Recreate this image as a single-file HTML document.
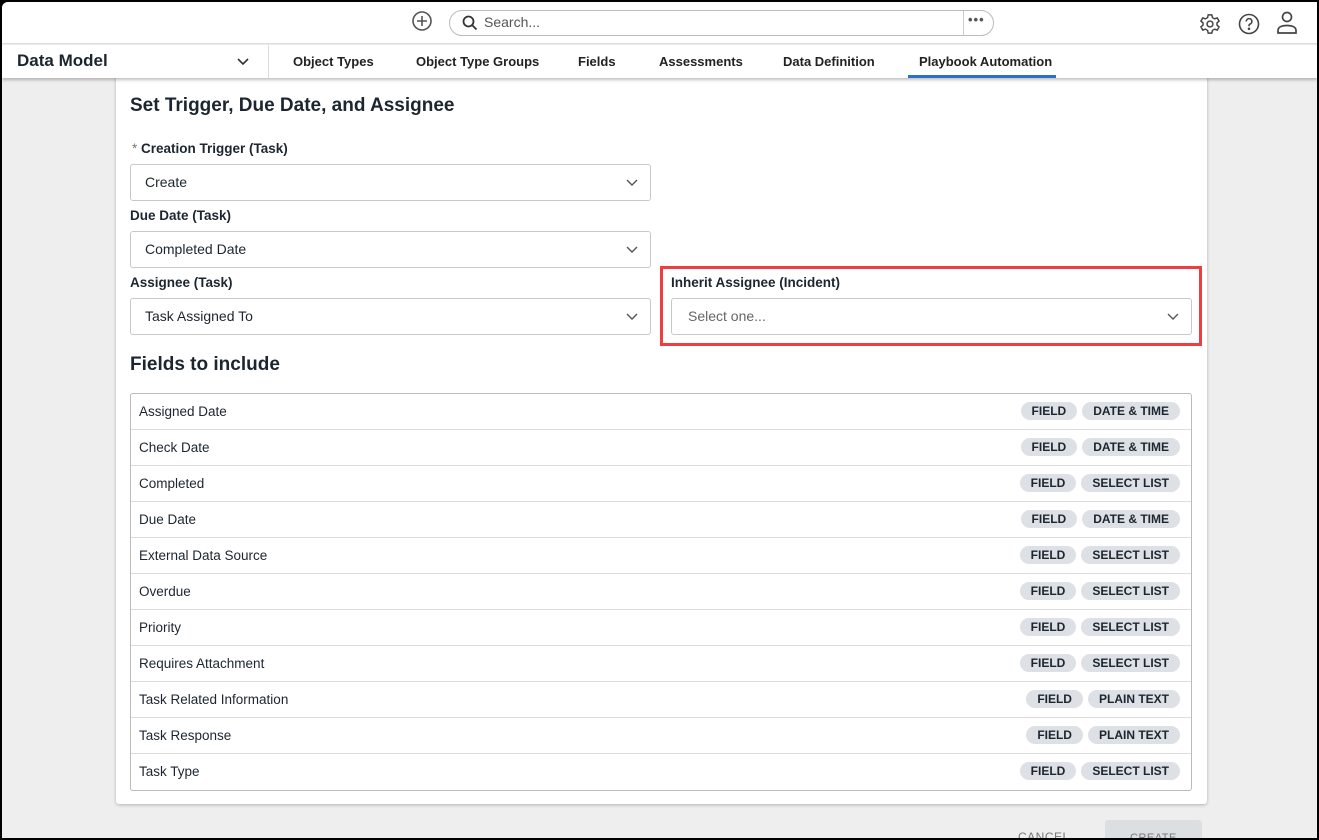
<!DOCTYPE html>
<html><head><style>
*{box-sizing:border-box;margin:0;padding:0}
body{width:1319px;height:840px;overflow:hidden;background:#000;font-family:"Liberation Sans",sans-serif;color:#1c2630}
#frame{position:absolute;left:2px;top:2px;width:1315px;height:836px;background:#eeeeee;overflow:hidden;border-radius:6px 0 0 0}
#top{position:absolute;left:0;top:0;width:100%;height:42px;background:#fff;border-bottom:1px solid #ddd}
#nav{position:absolute;left:0;top:43px;width:100%;height:33px;background:#fff;box-shadow:0 2px 3px rgba(0,0,0,.25);z-index:2}
#panel{position:absolute;left:114px;top:60px;width:1091px;height:742px;background:#fff;box-shadow:0 1px 3px rgba(0,0,0,.25);border-radius:3px}
.abs{position:absolute}
.lbl{position:absolute;font-weight:bold;font-size:13.5px}
.sel{position:absolute;height:37px;border:1px solid #c9c9c9;border-radius:3px;font-size:14px;padding:9px 14px}
.sel svg{position:absolute;right:12px;top:14px}
.tab{position:absolute;top:9px;font-size:13px;font-weight:bold;color:#222}
.row{position:absolute;left:0;width:100%;height:36px;border-top:1px solid #ddd;font-size:13.5px;padding:10px 8px}
.pills{position:absolute;right:11px;top:8px;display:flex;gap:5px}
.p{background:#dde0e4;border-radius:9px;height:18px;font-size:12px;font-weight:bold;padding:3px 11px;line-height:12px;color:#1c2630}
</style></head><body><div id="frame">
<div id="top">
<svg class="abs" style="left:409px;top:8px" width="22" height="22" viewBox="0 0 22 22" fill="none" stroke="#555" stroke-width="1.6"><circle cx="11" cy="11" r="9"/><path d="M11 6v10M6 11h10"/></svg>
<div class="abs" style="left:447px;top:8px;width:545px;height:26px;border:1px solid #bbb;border-radius:13px"></div>
<div class="abs" style="left:961px;top:9px;width:1px;height:24px;background:#ccc"></div>
<div class="abs" style="left:966px;top:10px;font-size:13px;color:#555;letter-spacing:1px;font-weight:bold">•••</div>
<svg class="abs" style="left:460px;top:13px" width="16" height="16" viewBox="0 0 16 16" fill="none" stroke="#333" stroke-width="1.8"><circle cx="6.5" cy="6.5" r="5"/><path d="M10.5 10.5l4 4"/></svg>
<div class="abs" style="left:482px;top:12px;font-size:14px;color:#555">Search...</div>
<svg class="abs" style="left:1197px;top:11px" width="22" height="22" viewBox="0 0 24 24" fill="none" stroke="#444" stroke-width="1.6"><circle cx="12" cy="12" r="3.2"/><path d="M10 2h4l.6 3 2.4 1.4 2.9-1 2 3.4-2.3 2v2.4l2.3 2-2 3.4-2.9-1L14.6 19 14 22h-4l-.6-3L7 17.6l-2.9 1-2-3.4 2.3-2v-2.4l-2.3-2 2-3.4 2.9 1L9.4 5z"/></svg>
<svg class="abs" style="left:1236px;top:11px" width="22" height="22" viewBox="0 0 22 22" fill="none" stroke="#444" stroke-width="1.6"><circle cx="11" cy="11" r="9.5"/><path d="M8.3 8.5a2.8 2.8 0 1 1 3.6 2.6c-.6.3-.9.8-.9 1.4v.7"/><circle cx="11" cy="15.8" r=".5" fill="#444"/></svg>
<svg class="abs" style="left:1274px;top:9px" width="22" height="24" viewBox="0 0 22 24" fill="none" stroke="#444" stroke-width="1.7"><circle cx="11" cy="6" r="4.5"/><path d="M2 22v-2.5c0-3 3-5 9-5s9 2 9 5V22z"/></svg>
</div>
<div id="nav">
<div class="abs" style="left:15px;top:6px;font-size:17px;font-weight:bold;color:#1c2630">Data Model</div>
<svg class="abs" style="left:234px;top:12px" width="14" height="10" viewBox="0 0 14 10" fill="none" stroke="#333" stroke-width="1.6"><path d="M2 2l5 5 5-5"/></svg>
<div class="abs" style="left:266px;top:0;width:1px;height:33px;background:#ddd"></div>
<div class="tab" style="left:291px">Object Types</div>
<div class="tab" style="left:414px">Object Type Groups</div>
<div class="tab" style="left:576px">Fields</div>
<div class="tab" style="left:657px">Assessments</div>
<div class="tab" style="left:781px">Data Definition</div>
<div class="tab" style="left:917px">Playbook Automation</div>
<div class="abs" style="left:906px;top:30px;width:148px;height:3px;background:#2d6fcf"></div>
</div>
<div id="panel">
<div class="abs" style="left:14px;top:33px;font-size:19px;font-weight:bold">Set Trigger, Due Date, and Assignee</div>
<div class="lbl" style="left:16px;top:79px"><span style="color:#777;font-weight:normal">*</span> Creation Trigger (Task)</div>
<div class="sel" style="left:14px;top:102px;width:521px">Create<svg width="12" height="8" viewBox="0 0 12 8" fill="none" stroke="#555" stroke-width="1.4"><path d="M1 1l5 5 5-5"/></svg></div>
<div class="lbl" style="left:14px;top:146px">Due Date (Task)</div>
<div class="sel" style="left:14px;top:169px;width:521px">Completed Date<svg width="12" height="8" viewBox="0 0 12 8" fill="none" stroke="#555" stroke-width="1.4"><path d="M1 1l5 5 5-5"/></svg></div>
<div class="lbl" style="left:14px;top:213px">Assignee (Task)</div>
<div class="sel" style="left:14px;top:236px;width:521px">Task Assigned To<svg width="12" height="8" viewBox="0 0 12 8" fill="none" stroke="#555" stroke-width="1.4"><path d="M1 1l5 5 5-5"/></svg></div>
<div class="abs" style="left:544px;top:204px;width:542px;height:80px;border:3px solid #ef3e42"></div>
<div class="lbl" style="left:555px;top:213px">Inherit Assignee (Incident)</div>
<div class="sel" style="left:555px;top:236px;width:521px;color:#666;padding-left:16px">Select one...<svg width="12" height="8" viewBox="0 0 12 8" fill="none" stroke="#555" stroke-width="1.4"><path d="M1 1l5 5 5-5"/></svg></div>
<div class="abs" style="left:14px;top:292px;font-size:19px;font-weight:bold">Fields to include</div>
<div class="abs" style="left:14px;top:331px;width:1062px;height:398px;border:1px solid #bbb;border-radius:3px;overflow:hidden">
<div class="row" style="top:-1px;border-top:none;padding-top:11px">Assigned Date<div class="pills" style="top:9px"><span class="p">FIELD</span><span class="p">DATE &amp; TIME</span></div></div>
<div class="row" style="top:35px">Check Date<div class="pills"><span class="p">FIELD</span><span class="p">DATE &amp; TIME</span></div></div>
<div class="row" style="top:71px">Completed<div class="pills"><span class="p">FIELD</span><span class="p">SELECT LIST</span></div></div>
<div class="row" style="top:107px">Due Date<div class="pills"><span class="p">FIELD</span><span class="p">DATE &amp; TIME</span></div></div>
<div class="row" style="top:143px">External Data Source<div class="pills"><span class="p">FIELD</span><span class="p">SELECT LIST</span></div></div>
<div class="row" style="top:179px">Overdue<div class="pills"><span class="p">FIELD</span><span class="p">SELECT LIST</span></div></div>
<div class="row" style="top:215px">Priority<div class="pills"><span class="p">FIELD</span><span class="p">SELECT LIST</span></div></div>
<div class="row" style="top:251px">Requires Attachment<div class="pills"><span class="p">FIELD</span><span class="p">SELECT LIST</span></div></div>
<div class="row" style="top:287px">Task Related Information<div class="pills"><span class="p">FIELD</span><span class="p">PLAIN TEXT</span></div></div>
<div class="row" style="top:323px">Task Response<div class="pills"><span class="p">FIELD</span><span class="p">PLAIN TEXT</span></div></div>
<div class="row" style="top:359px">Task Type<div class="pills"><span class="p">FIELD</span><span class="p">SELECT LIST</span></div></div>
</div>
</div>
<div class="abs" style="left:1016px;top:828px;font-size:12px;color:#777;letter-spacing:.5px">CANCEL</div>
<div class="abs" style="left:1103px;top:818px;width:97px;height:30px;background:#dcdfe2;border-radius:3px"></div>
<div class="abs" style="left:1128px;top:830px;font-size:11px;color:#777;letter-spacing:.5px">CREATE</div>
</div></body></html>
